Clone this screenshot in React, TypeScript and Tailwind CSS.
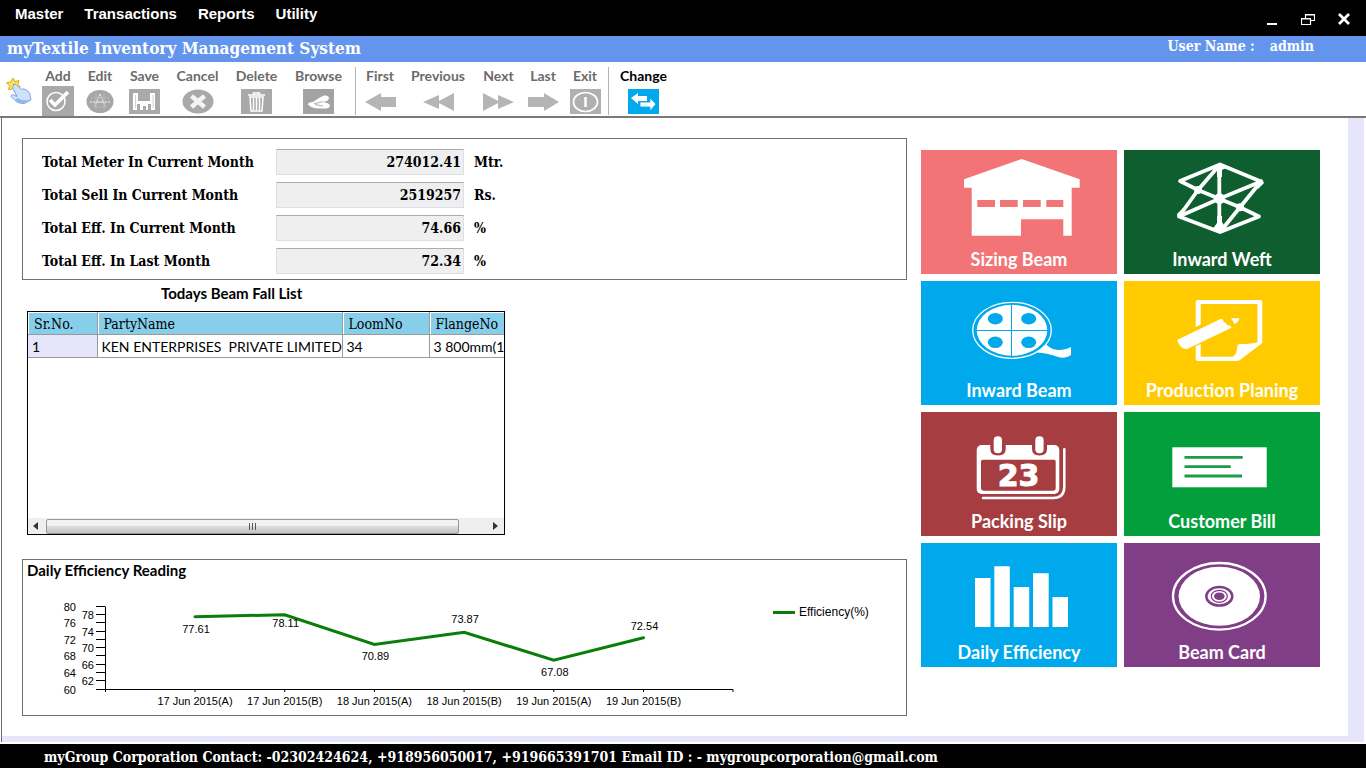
import React from 'react';

const SERIF = "font-['DejaVu_Serif_Condensed','Liberation_Serif',serif]";
const SANS = "font-['Lato','Liberation_Sans',sans-serif]";

interface ToolProps {
  label: string;
  width: string;
  active?: boolean;
  children: React.ReactNode;
}

const Tool: React.FC<ToolProps> = ({ label, width, active, children }) => (
  <button className={`flex flex-col items-center ${width}`}>
    <span className={`text-sm font-bold leading-5 whitespace-nowrap ${active ? 'text-black' : 'text-[#6b6b6b]'}`}>{label}</span>
    {children}
  </button>
);

const Separator = () => <div className="w-px h-12 bg-[#b4b4b4]" />;

const HandIcon = () => (
  <svg width="26" height="26" viewBox="0 0 26 26">
    <path d="M7 0l2 3.500 4-1-1 4 2.500 2.500-4 1-1 3.500-3-2.500-4 .5 1-4-3-2.500 4-1z" fill="#ffe14a" stroke="#c79a1c" strokeWidth="0.800" />
    <path d="M7 7c1-1.500 3-1 4 .5l4 4c2-1 4-.5 5 .5 3 1 4 4 4 6l1 4-7 3.500c-4 0-7-1-9-3l-4-4c0-2 2-2.500 4-1l2 1-4-8c-.5-1-.2-2.500 1-3.500z" fill="#cfe1fb" stroke="#7fa3e2" strokeWidth="1" />
    <path d="M12 20c3 3 8 3 12 1l-6 4c-4 0-7-1-9-3z" fill="#8db2ee" />
  </svg>
);

const Toolbar = () => (
  <div className={`flex items-start h-14 pt-1 border-b-2 border-[#7d7878] bg-white ${SANS}`}>
    <div className="w-[37px] pl-[6px] pt-3">
      <HandIcon />
    </div>
    <Tool label="Add" width="w-[42px]">
      <svg width="32" height="30" viewBox="0 0 32 30">
        <rect width="32" height="30" fill="#a9a9a9" />
        <circle cx="14" cy="15.500" r="9" fill="none" stroke="#fff" strokeWidth="1.500" />
        <path d="M8 14l5 5L26 6" fill="none" stroke="#fff" strokeWidth="3.600" />
      </svg>
    </Tool>
    <Tool label="Edit" width="w-[42px]">
      <svg className="mt-[3px]" width="28" height="25" viewBox="0 0 28 25">
        <ellipse cx="14" cy="12.500" rx="13.500" ry="11.500" fill="#a6a6a6" />
        <path d="M14 5l-5 12M14 5l5 12M4 13h20M9 15q5-4 10 0" fill="none" stroke="#dcdcdc" strokeWidth="1.500" strokeDasharray="2 1" />
        <path d="M5 9h18M8 18h12M10 4v17M18 4v17" stroke="#bdbdbd" strokeWidth="0.700" />
      </svg>
    </Tool>
    <Tool label="Save" width="w-[47px]">
      <svg className="mt-[3px]" width="31" height="25" viewBox="0 0 31 25">
        <rect width="31" height="25" fill="#a9a9a9" />
        <path d="M4 4h5v8h12V4h5v17H4z" fill="#fff" />
        <path d="M8 21v-6h14v6z" fill="#a9a9a9" />
        <path d="M11 15h8v6h-2v-4h-3v4h-3z" fill="#fff" />
        <path d="M6.500 6v13M24 6v13" stroke="#c4c4c4" strokeWidth="0.800" />
      </svg>
    </Tool>
    <Tool label="Cancel" width="w-[59px]">
      <svg className="mt-[3px]" width="32" height="25" viewBox="0 0 32 25">
        <ellipse cx="16" cy="12.500" rx="15.500" ry="12" fill="#a9a9a9" />
        <path d="M9.500 7l13 11M22.500 7l-13 11" stroke="#f4f4f4" strokeWidth="4.500" />
      </svg>
    </Tool>
    <Tool label="Delete" width="w-[59px]">
      <svg className="mt-[3px]" width="31" height="25" viewBox="0 0 31 25">
        <rect width="31" height="25" fill="#a9a9a9" />
        <path d="M7 6h17M12.500 5.500V4h6v1.500M9 8h13l-1 14H10zM12.500 9v12M15.500 9v12M18.500 9v12" fill="none" stroke="#fff" strokeWidth="1.500" />
      </svg>
    </Tool>
    <Tool label="Browse" width="w-[65px]">
      <svg className="mt-[3px]" width="31" height="25" viewBox="0 0 31 25">
        <rect width="31" height="25" fill="#a3a3a3" />
        <path d="M5 15.500q0-2.500 5-2.500l6-4 5-2.500q5-.5 5 3-1 2.500-4 3l-2 .5 4 1q3 1 3 3-1 2.500-4 2.500H14q-6-.5-9-4z" fill="#fff" />
        <path d="M11 14.500q5-.5 9-2M12 15.500l8 1.500" stroke="#a3a3a3" strokeWidth="0.900" fill="none" />
      </svg>
    </Tool>
    <div className="flex pl-1 pr-[3px] pt-px"><Separator /></div>
    <Tool label="First" width="w-[42px]">
      <svg className="mt-[3px]" width="31" height="25" viewBox="0 0 31 25">
        <path d="M0 13L16 4v4h15v10H16v4z" fill="#b5b5b5" />
      </svg>
    </Tool>
    <Tool label="Previous" width="w-[74px]">
      <svg className="mt-[3px]" width="31" height="25" viewBox="0 0 31 25">
        <path d="M0 13l16-7v14zM14 13l17-9v18z" fill="#b5b5b5" />
      </svg>
    </Tool>
    <Tool label="Next" width="w-[47px]">
      <svg className="mt-[3px]" width="31" height="25" viewBox="0 0 31 25">
        <path d="M31 13l-16-7v14zM17 13L0 4v18z" fill="#b5b5b5" />
      </svg>
    </Tool>
    <Tool label="Last" width="w-[42px]">
      <svg className="mt-[3px]" width="31" height="25" viewBox="0 0 31 25">
        <path d="M31 13L16 4v4H0v10h16v4z" fill="#b5b5b5" />
      </svg>
    </Tool>
    <Tool label="Exit" width="w-[42px]">
      <svg className="mt-[3px]" width="31" height="25" viewBox="0 0 31 25">
        <rect width="31" height="25" fill="#b0b0b0" />
        <ellipse cx="15.500" cy="13" rx="12" ry="9.500" fill="none" stroke="#fff" strokeWidth="1.700" />
        <path d="M15.500 8v10" stroke="#fff" strokeWidth="2.500" />
      </svg>
    </Tool>
    <div className="flex px-[2px] pt-px"><Separator /></div>
    <Tool label="Change" width="w-[65px]" active>
      <svg className="mt-[3px]" width="31" height="25" viewBox="0 0 31 25">
        <rect width="31" height="25" fill="#00a8ec" />
        <path d="M3 9l7-5v3h9v5h-9v3z" fill="#fff" />
        <path d="M28 15l-6-6v4H12v5h10v4z" fill="#fff" stroke="#00a8ec" strokeWidth="0.800" />
      </svg>
    </Tool>
  </div>
);

const totals = [
  { id: 'meter', label: 'Total Meter In Current Month', value: '274012.41', unit: 'Mtr.' },
  { id: 'sell', label: 'Total Sell In Current Month', value: '2519257', unit: 'Rs.' },
  { id: 'effCurrent', label: 'Total Eff. In Current Month', value: '74.66', unit: '%' },
  { id: 'effLast', label: 'Total Eff. In Last Month', value: '72.34', unit: '%' },
];

const TotalsPanel = () => (
  <section className={`flex flex-col gap-[7px] border border-[#6e6e6e] pt-[10px] pb-[5px] pl-[19px] text-sm font-bold ${SERIF}`}>
    {totals.map((t) => (
      <div key={t.id} className="flex items-center h-[26px]">
        <label htmlFor={t.id} className="w-[234px] whitespace-nowrap">{t.label}</label>
        <input
          id={t.id}
          readOnly
          value={t.value}
          className="w-[188px] h-[26px] pr-[2px] text-right bg-[#efefef] border border-[#dcdfe3] border-t-[#a9abad]"
        />
        <span className="pl-[10px]">{t.unit}</span>
      </div>
    ))}
  </section>
);

const TH = 'pl-[6px] pt-[2px] font-normal border-b border-[#9a9a9a] shadow-[inset_1px_1px_0_#fff]';
const TD = 'pl-1 pt-[2px] border-b border-[#9a9a9a]';

const BeamFallList = () => (
  <section className="w-[478px] ml-[5px]">
    <h2 className={`pl-[134px] pt-[3px] h-[31px] text-[15px] leading-5 font-bold ${SANS}`}>Todays Beam Fall List</h2>
    <div className="flex flex-col h-[224px] border border-black overflow-hidden">
      <div className="flex-1 overflow-hidden">
        <table className="table-fixed w-[546px] border-collapse">
          <thead className={SERIF}>
            <tr className="h-[22px] bg-[#87ceeb] text-sm leading-4 text-left">
              <th className={`w-[69px] border-r ${TH}`}>Sr.No.</th>
              <th className={`w-[245px] border-r ${TH}`}>PartyName</th>
              <th className={`w-[87px] border-r ${TH}`}>LoomNo</th>
              <th className={TH}>FlangeNo</th>
            </tr>
          </thead>
          <tbody className={SANS}>
            <tr className="h-[22px] text-sm leading-5 whitespace-pre">
              <td className={`bg-[#e6e6fa] border-r ${TD}`}>1</td>
              <td className={`border-r ${TD}`}>KEN ENTERPRISES  PRIVATE LIMITED</td>
              <td className={`border-r ${TD}`}>34</td>
              <td className={TD}>3 800mm(1</td>
            </tr>
          </tbody>
        </table>
      </div>
      <div className="flex items-center h-4 bg-[#efefef]">
        <button aria-label="Scroll left" className="flex justify-center w-[18px] pr-1">
          <svg width="5" height="8" viewBox="0 0 5 8"><path d="M5 0v8L0 4z" fill="#333" /></svg>
        </button>
        <div className="flex items-center justify-center gap-[2px] w-[413px] h-[15px] rounded-[2px] border border-[#979797] bg-linear-to-b from-[#f2f2f2] from-45% via-[#dadada] via-50% to-[#c4c4c8]">
          <span className="w-px h-[7px] bg-[#555]" />
          <span className="w-px h-[7px] bg-[#555]" />
          <span className="w-px h-[7px] bg-[#555]" />
        </div>
        <div className="flex-1" />
        <button aria-label="Scroll right" className="flex justify-center w-[18px]">
          <svg width="5" height="8" viewBox="0 0 5 8"><path d="M0 0v8l5-4z" fill="#333" /></svg>
        </button>
      </div>
    </div>
  </section>
);

// dy moves the value label off the point, above or below the line
const readings = [
  { day: '17 Jun 2015(A)', value: 77.61, dy: 16 },
  { day: '17 Jun 2015(B)', value: 78.11, dy: 12 },
  { day: '18 Jun 2015(A)', value: 70.89, dy: 15 },
  { day: '18 Jun 2015(B)', value: 73.87, dy: -9 },
  { day: '19 Jun 2015(A)', value: 67.08, dy: 16 },
  { day: '19 Jun 2015(B)', value: 72.54, dy: -8 },
];

const ticks = [60, 62, 64, 66, 68, 70, 72, 74, 76, 78, 80];
const xAt = (i: number) => 172 + i * 89.7;
const yAt = (v: number) => 107.5 - (v - 60) * 4.13;

const EfficiencyChart = () => (
  <section className="border border-[#6e6e6e] h-[157px]">
    <h2 className={`pl-1 text-[15px] leading-5 font-bold ${SANS}`}>Daily Efficiency Reading</h2>
    <div className="flex font-['Liberation_Sans',sans-serif] text-[11px]">
      <svg className="shrink-0" width="740" height="130" viewBox="0 -2 740 130">
        <path d="M82.500 25V110M73 107.500H710V110" fill="none" stroke="#000" />
        {ticks.map((t) => (
          <g key={t}>
            <path d={`M73 ${Math.round(yAt(t)) - 0.5}H82.500`} stroke="#000" />
            <text x={t % 4 === 0 ? 53 : 71} y={yAt(t) + 4} textAnchor="end">{t}</text>
          </g>
        ))}
        <polyline points={readings.map((r, i) => `${xAt(i)},${yAt(r.value)}`).join(' ')} fill="none" stroke="#0a7d0a" strokeWidth="3" strokeLinecap="round" />
        {readings.map((r, i) => (
          <g key={r.day} textAnchor="middle">
            <path d={`M${xAt(i)} 107V110`} stroke="#000" />
            <text x={xAt(i) + 1} y={yAt(r.value) + r.dy}>{r.value}</text>
            <text x={xAt(i)} y="123">{r.day}</text>
          </g>
        ))}
      </svg>
      <div className="flex items-center gap-1 h-4 mt-6 ml-[10px] text-xs">
        <span className="w-[22px] h-[3px] bg-[#0a7d0a]" />
        <span>Efficiency(%)</span>
      </div>
    </div>
  </section>
);

interface TileProps {
  label: string;
  color: string;
  children: React.ReactNode;
}

const Tile: React.FC<TileProps> = ({ label, color, children }) => (
  <button className={`flex flex-col items-center h-[124px] ${color}`}>
    <svg width="196" height="96" viewBox="0 0 196 96" fill="#fff">{children}</svg>
    <span className="text-lg leading-[26px] font-bold text-white">{label}</span>
  </button>
);

const Tiles = () => (
  <nav className={`grid grid-cols-2 gap-[7px] w-[399px] shrink-0 mt-3 ${SANS}`}>
    <Tile label="Sizing Beam" color="bg-[#f27476]">
      <path d="M100.700 9L158.700 29.300V37.700H150.700V85.700H142.300V69.300H100V85.700H50.700V37.700H43V29.300Z" />
      <path d="M56.300 50h17.700v7h-17.700zM79 50h17.700v7H79zM102 50h17.700v7H102zM125.300 50h17v7h-17z" fill="#f27476" />
    </Tile>
    <Tile label="Inward Weft" color="bg-[#0f5e2f]">
      <path d="M96 14.500L56 31L74 40L95.300 48.700L116 57.300L135 66.500L96 82L55 66.500L95.300 48.700L137 31.500ZM95.300 14.500V82M96 14.500L74 40L55 66.500M137 31.500L116 57.300L96 82" fill="none" stroke="#fff" strokeWidth="3.800" strokeLinejoin="round" />
      <path d="M88 17q8-6 16 0l-6 3v7h-5v-7l-3 2zM88 80q8 6 16 0l-3-3-3-5v-6h-5v7zM138 29l2 4-6 6-2-6zM54 68l-1-4 6-6 1 6z" />
      <circle cx="95.500" cy="48.700" r="5.500" />
      <circle cx="74" cy="40" r="4" />
      <circle cx="116" cy="57.300" r="4" />
    </Tile>
    <Tile label="Inward Beam" color="bg-[#00a8ec]">
      <ellipse cx="91" cy="49.300" rx="39.300" ry="28" fill="none" stroke="#fff" strokeWidth="1.300" />
      <ellipse cx="91" cy="49.300" rx="35.300" ry="25.500" />
      <path d="M90.500 23V76M55 49.500H127" stroke="#00a8ec" />
      <g fill="#00a8ec">
        <ellipse cx="74.300" cy="37.700" rx="7.500" ry="5.800" />
        <ellipse cx="107.700" cy="37.700" rx="7.500" ry="5.800" />
        <ellipse cx="74.300" cy="61.300" rx="7.500" ry="5.800" />
        <ellipse cx="107.700" cy="61.300" rx="7.500" ry="5.800" />
      </g>
      <path d="M125 63.500Q131 69 139 69Q145 69 150 66V74Q145 78 137 76Q127 72 116 71.500Q121 68.500 125 63.500Z" />
    </Tile>
    <Tile label="Production Planing" color="bg-[#ffcb00]">
      <path d="M71.700 46V21q0-2 2-2H136q2.300 0 2.300 2V62L116 79q-1.500 1-3.500 1H73.700q-2 0-2-2V65l5-2V75.700H109Q113 73 113.300 65q.2-2 3-2Q129 63 133.500 61V23H76.700V43.500Z" />
      <path d="M53 59L97 37.700q2 0 2.500 3l2 1 2 2.500 3 .5 1 2L63 68Q57 69 53 59ZM107 37.300h8.500q-1 4-5 5.800Q109 40 107 37.300Z" />
    </Tile>
    <Tile label="Packing Slip" color="bg-[#a63e41]">
      <rect x="55.700" y="33" width="82.600" height="49" rx="5" />
      <path d="M143.300 37.300V75Q143.300 86 132 86H62" fill="none" stroke="#fff" strokeWidth="2.500" strokeLinecap="round" />
      <path d="M62 47.700H133q1.700 0 1.700 1.700V76q0 2.700-2.700 2.700H63q-3 0-3-2.700V49.400q0-1.700 2-1.700zM69.300 32H84.700V37q0 6.500-7.700 6.500T69.300 37zM111 32H126V37q0 6.500-7.500 6.500T111 37z" fill="#a63e41" />
      <rect x="72.700" y="24.300" width="8.300" height="17" rx="4" />
      <rect x="114.300" y="24.300" width="8.300" height="17" rx="4" />
      <text x="97.500" y="74" textAnchor="middle" stroke="#fff" className="font-['DejaVu_Sans',sans-serif] text-[30px] font-bold">23</text>
    </Tile>
    <Tile label="Customer Bill" color="bg-[#029f3c]">
      <rect x="48.300" y="35.300" width="94.400" height="40" />
      <path d="M60.500 45.300H118.700M60.500 54.700H106.700M60.500 64H118" stroke="#1b9c49" strokeWidth="2.800" />
    </Tile>
    <Tile label="Daily Efficiency" color="bg-[#00a8ec]">
      <path d="M54 35h15.500v49H54zM73.300 23.300h15.500V84H73.300zM92.700 44h15.500v40H92.700zM112 30.300h15.700V84H112zM131.500 54H147v30h-15.500z" />
    </Tile>
    <Tile label="Beam Card" color="bg-[#803e87]">
      <ellipse cx="95.300" cy="53.300" rx="46.300" ry="33.300" fill="none" stroke="#fff" strokeWidth="2.300" />
      <ellipse cx="95.300" cy="53.300" rx="40.700" ry="29.500" />
      <g fill="none" stroke="#803e87">
        <ellipse cx="95.300" cy="53.300" rx="13" ry="9.300" strokeWidth="2.500" />
        <ellipse cx="95.300" cy="53.300" rx="8" ry="6" strokeWidth="1.200" />
      </g>
      <ellipse cx="95.300" cy="53.300" rx="5.300" ry="3.800" fill="#803e87" />
    </Tile>
  </nav>
);

export default function App() {
  return (
    <div className="flex flex-col min-h-screen bg-white text-black">
      <header className="flex justify-between h-9 bg-black text-white">
        <nav className="flex items-start gap-[21px] pl-[15px] pt-1 text-[15px] leading-5 font-bold font-['Liberation_Sans',sans-serif]">
          <a href="#master">Master</a>
          <a href="#transactions">Transactions</a>
          <a href="#reports">Reports</a>
          <a href="#utility">Utility</a>
        </nav>
        <div className="flex items-center gap-[22px] pr-[15px] pt-[2px]">
          <button aria-label="Minimize">
            <svg width="14" height="14" viewBox="0 0 14 14"><path d="M2 11h10v2H2z" fill="#fff" /></svg>
          </button>
          <button aria-label="Restore">
            <svg width="14" height="14" viewBox="0 0 14 14" fill="none" stroke="#fff"><path d="M4.500 6V2.500h9v6H10M4 3h10M.5 6.500h9v6h-9zM0 7h10" strokeWidth="1.200" /></svg>
          </button>
          <button aria-label="Close">
            <svg width="14" height="14" viewBox="0 0 14 14"><path d="M2 2l10 10M12 2L2 12" stroke="#fff" strokeWidth="2.800" /></svg>
          </button>
        </div>
      </header>

      <div className={`flex items-start justify-between h-[26px] pl-[7px] pr-[52px] bg-[#6495ed] text-white font-bold ${SERIF}`}>
        <h1 className="text-[17px] leading-6">myTextile Inventory Management System</h1>
        <div className="flex gap-[15px] text-sm leading-5">
          <span>User Name :</span>
          <span>admin</span>
        </div>
      </div>

      <Toolbar />

      <main className="flex-1 ml-px mr-[2px] mb-[2px] pr-4 pb-[6px] bg-[#e6e6fa] border-l border-[#6b6b6b] flex">
        <div className="flex flex-1 items-start gap-[14px] bg-white pl-5 pr-7 pt-5">
          <div className="flex-1 min-w-0">
            <TotalsPanel />
            <BeamFallList />
            <div className="h-6" />
            <EfficiencyChart />
          </div>
          <Tiles />
        </div>
      </main>

      <footer className={`h-6 pl-11 pt-px bg-black text-white text-sm leading-6 font-bold whitespace-nowrap ${SERIF}`}>
        myGroup Corporation Contact: -02302424624, +918956050017, +919665391701 Email ID : - mygroupcorporation@gmail.com
      </footer>
    </div>
  );
}
